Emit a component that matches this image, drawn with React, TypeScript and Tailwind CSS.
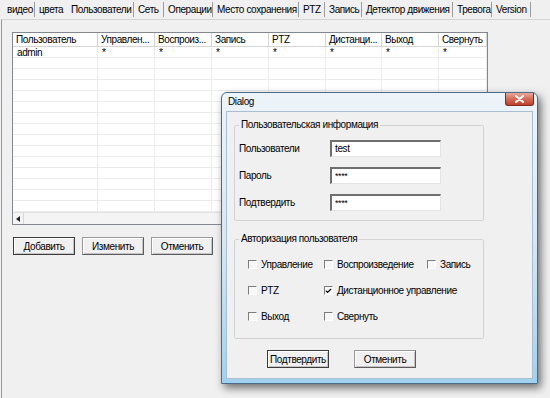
import { Check } from "lucide-react";

const tabs = [
  { t: "видео", w: 32, sep: true },
  { t: "цвета", w: 32, sep: false },
  { t: "Пользователи", w: 67, sep: true },
  { t: "Сеть", w: 30, sep: true },
  { t: "Операции", w: 49, sep: true },
  { t: "Место сохранения", w: 86, sep: true },
  { t: "PTZ", w: 26, sep: true },
  { t: "Запись", w: 37, sep: true },
  { t: "Детектор движения", w: 91, sep: true },
  { t: "Тревога", w: 39, sep: true },
  { t: "Version", w: 39, sep: true },
];

const columns = [
  { t: "Пользователь", w: 85 },
  { t: "Управлен...", w: 57 },
  { t: "Воспроиз...", w: 57 },
  { t: "Запись", w: 57 },
  { t: "PTZ", w: 57 },
  { t: "Дистанци...", w: 56 },
  { t: "Выход", w: 57 },
  { t: "Свернуть", w: 48 },
];

const rows = Array.from({ length: 15 }, (_, i) => i);

function WinButton({ label, isDefault }: { label: string; isDefault?: boolean }) {
  return (
    <button
      className={
        "w-[62px] h-[18px] flex items-center justify-center bg-[#f0f0f0] border shadow-[inset_1px_1px_0_#ffffff,inset_-1px_-1px_0_#c4c4c4] " +
        (isDefault
          ? "border-[#3c3c3c]"
          : "border-[#9a9a9a] border-b-[#5c5c5c] border-r-[#5c5c5c]")
      }
    >
      {label}
    </button>
  );
}

function Box({ checked, label }: { checked?: boolean; label: string }) {
  return (
    <div className="flex items-center h-[13px] gap-[4px]">
      <span className="w-[9px] h-[9px] flex items-center justify-center border-t border-l border-t-[#7c7c7c] border-l-[#7c7c7c] border-b border-r border-b-white border-r-white bg-[#f7f7f7]">
        {checked && <Check size={8} strokeWidth={4} className="text-black" />}
      </span>
      <span className="leading-[12px] whitespace-nowrap">{label}</span>
    </div>
  );
}

function Field({ label, value }: { label: string; value: string }) {
  return (
    <div className="flex items-center h-[17px]">
      <span className="w-[91px] leading-[12px]">{label}</span>
      <div className="w-[111px] h-[17px] bg-white border-t-2 border-l-2 border-t-[#6e6e6e] border-l-[#6e6e6e] border-b border-r border-b-[#e3e3e3] border-r-[#e3e3e3] pl-[3px] flex items-center">
        {value === "test" ? (
          <span className="leading-[12px]">{value}</span>
        ) : (
          <span className="leading-[8px] text-[9px] self-start mt-[3px]">{value}</span>
        )}
      </div>
    </div>
  );
}

export default function App() {
  return (
    <div className="relative w-[550px] h-[398px] bg-[#f0f0f0] overflow-hidden text-black text-[10px] tracking-[-0.4px] font-['Liberation_Sans',Arial,sans-serif]">
      {/* tabs */}
      <div className="flex h-[19px] items-center pl-[3px]">
        {tabs.map((tab) => (
          <div
            key={tab.t}
            style={{ width: tab.w }}
            className={
              "h-[15px] flex items-center pl-[4px] whitespace-nowrap leading-[12px] " +
              (tab.sep ? "border-r border-[#9c9c9c]" : "")
            }
          >
            {tab.t}
          </div>
        ))}
      </div>

      {/* tab panel */}
      <div className="ml-[1px] h-[379px] border-l border-t border-l-[#9a9a9a] border-t-[#d4d4d4] pl-[10px] pt-[12px]">
        <div className="w-[476px] h-[193px] border border-[#828790] bg-white flex flex-col overflow-hidden">
          <div className="flex h-[14px] border-b border-[#d5d5d5] shrink-0">
            {columns.map((c) => (
              <div
                key={c.t}
                style={{ width: c.w }}
                className="border-r border-[#d5d5d5] pl-[3px] leading-[14px] whitespace-nowrap overflow-hidden"
              >
                {c.t}
              </div>
            ))}
          </div>
          <div className="flex-1 overflow-hidden">
            {rows.map((r) => (
              <div key={r} className="flex h-[11px] border-b border-[#ececec]">
                {columns.map((c, ci) => (
                  <div
                    key={c.t}
                    style={{ width: c.w }}
                    className="border-r border-[#ececec] pl-[4px] leading-[11px] overflow-hidden"
                  >
                    {r === 0 ? (ci === 0 ? "admin" : "*") : ""}
                  </div>
                ))}
              </div>
            ))}
          </div>
          <div className="h-[12px] shrink-0 flex border-t border-[#e2e2e2] bg-[#f4f4f4]">
            <div className="w-[11px] h-full border-r border-[#d6d6d6] flex items-center justify-center">
              <svg width="4" height="6" viewBox="0 0 4 6">
                <polygon points="4,0 0,3 4,6" fill="#222" />
              </svg>
            </div>
          </div>
        </div>

        <div className="flex gap-[7px] mt-[12px] ml-[1px]">
          <WinButton label="Добавить" isDefault />
          <WinButton label="Изменить" />
          <WinButton label="Отменить" />
        </div>
      </div>

      {/* dialog window */}
      <div className="absolute left-[221px] top-[92px] w-[317px] h-[292px] border border-[#4a6a86] rounded-t-[6px] bg-gradient-to-b from-[#edf4fa] via-[#d8e7f3] to-[#9fd2f0] shadow-[3px_4px_8px_rgba(0,0,0,0.55)] flex flex-col">
        <div className="relative h-[18px] flex items-center pl-[6px] shrink-0">
          <span className="leading-[12px]">Dialog</span>
          <div className="absolute right-[3px] top-0 w-[29px] h-[13px] rounded-b-[3px] border border-t-0 border-[#7e2a1c] bg-gradient-to-b from-[#e8aa9c] via-[#d46a55] to-[#c0402a] flex items-center justify-center">
            <svg width="9" height="8" viewBox="0 0 9 8">
              <path d="M1 1 L8 7 M8 1 L1 7" stroke="#ffffff" strokeWidth="2" strokeLinecap="round" />
            </svg>
          </div>
        </div>
        <div className="mx-[4px] h-[268px] bg-[#f0f0f0] border border-[#a9bfd1] px-[7px]">
          <fieldset className="mt-[7px] w-[250px] border border-[#d3d3d3] rounded-[2px] pl-[4px] pb-[9px]">
            <legend className="px-[2px] leading-[12px]">Пользовательская информация</legend>
            <div className="mt-[9px] flex flex-col gap-[10px]">
              <Field label="Пользователи" value="test" />
              <Field label="Пароль" value="****" />
              <Field label="Подтвердить" value="****" />
            </div>
          </fieldset>

          <fieldset className="mt-[12px] w-[250px] border border-[#d3d3d3] rounded-[2px] pl-[4px] pb-[15px]">
            <legend className="px-[2px] leading-[12px]">Авторизация пользователя</legend>
            <div className="mt-[13px] ml-[9px] grid grid-cols-[76px_103px_1fr] gap-y-[13px]">
              <Box label="Управление" />
              <Box label="Воспроизведение" />
              <Box label="Запись" />
              <Box label="PTZ" />
              <div className="col-span-2">
                <Box label="Дистанционное управление" checked />
              </div>
              <Box label="Выход" />
              <Box label="Свернуть" />
            </div>
          </fieldset>

          <div className="flex gap-[25px] mt-[11px] ml-[33px]">
            <WinButton label="Подтвердить" isDefault />
            <WinButton label="Отменить" />
          </div>
        </div>
      </div>
    </div>
  );
}
